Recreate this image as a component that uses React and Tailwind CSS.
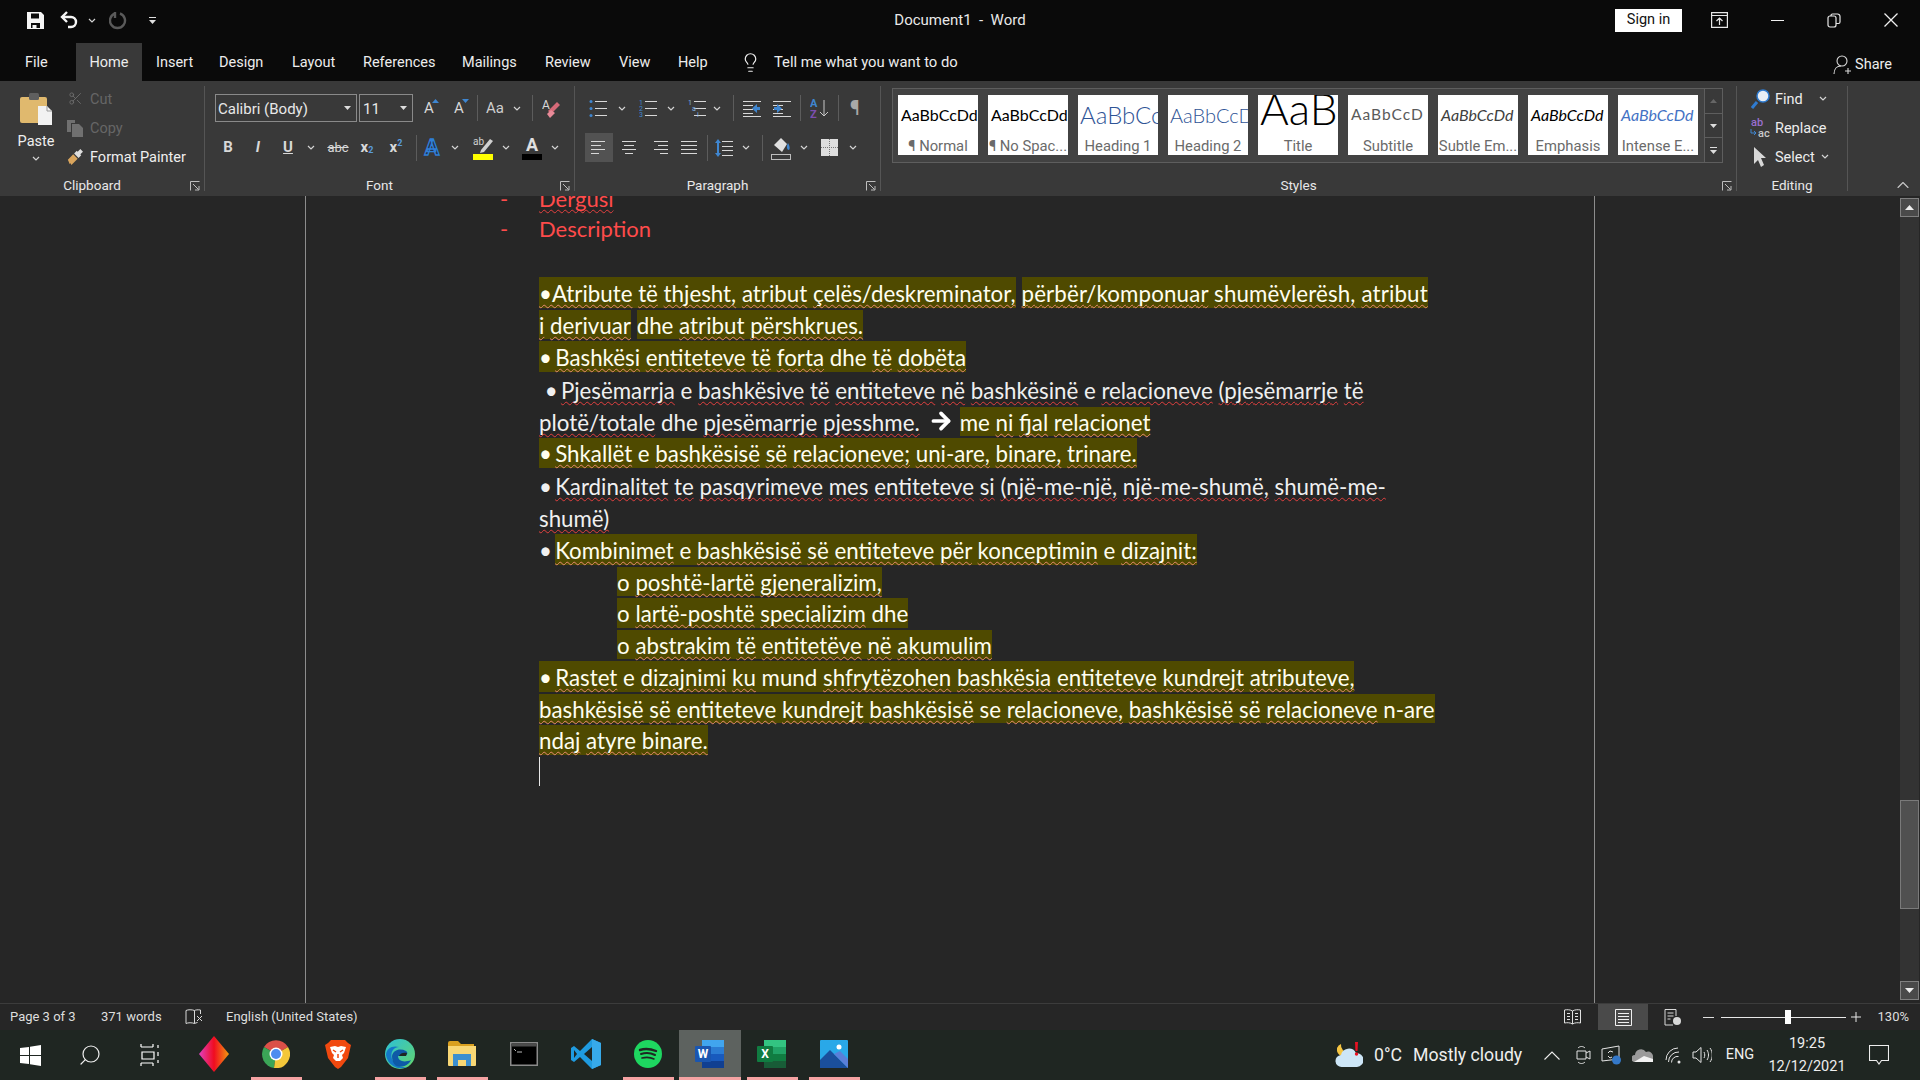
import { ArrowRight, Lightbulb, Scissors, Search, ChevronUp } from "lucide-react";

/* ================= SMALL HELPERS ================= */

const C = ({ className = "", children }) => (
    <div className={`flex items-center justify-center shrink-0 h-full ${className}`}>{children}</div>
);

const Chev = ({ color = "#d4d4d4" }) => (
    <svg width="8" height="5" viewBox="0 0 8 5"><path d="M1 1l3 3 3-3" fill="none" stroke={color} strokeWidth="1.2" /></svg>
);

const Sep = ({ className = "h-[26px]" }) => <div className={`w-px shrink-0 bg-[#5c5c5c] ${className}`} />;

const Launcher = () => (
    <svg width="10" height="10" viewBox="0 0 10 10" fill="none" stroke="#bdbdbd">
        <path d="M.5 9.5V.5h9" /><path d="M3 3l5.5 5.5M9 5v4H5" />
    </svg>
);

const Group = ({ label, launcher = true, className = "", children }) => (
    <div className={`shrink-0 flex flex-col h-full ${className}`}>
        <div className="h-[92px]">{children}</div>
        <div className="h-[23px] pt-[2px] flex items-center text-[13.5px] text-[#e8e8e8]">
            <div className="flex-1 text-center">{label}</div>
            {launcher && <div className="w-[20px] pr-[4px] flex justify-end"><Launcher /></div>}
        </div>
    </div>
);

const GroupSep = () => <div className="w-px shrink-0 bg-[#555555] my-[5px]" />;

const Lines = ({ rows, x = 0, w = 14 }) => (
    <g stroke="#d8d8d8" strokeWidth="1">
        {rows.map((y, i) => <path key={i} d={`M${x} ${y + 0.5}h${Array.isArray(w) ? w[i] : w}`} />)}
    </g>
);

const Ic = ({ w = 18, h = 18, children }) => (
    <svg width={w} height={h} viewBox={`0 0 ${w} ${h}`} fill="none">{children}</svg>
);

const AlignIcon = ({ kind }) => {
    const rows = [2, 6, 10, 14];
    const d = {
        left: [14, 10, 14, 8],
        center: [14, 10, 14, 8],
        right: [14, 10, 14, 8],
        justify: [16, 16, 16, 16]
    }[kind];
    return (
        <Ic w={16} h={17}>
            <g stroke="#d8d8d8">
                {rows.map((y, i) => {
                    const x = kind === "left" || kind === "justify" ? 0 : kind === "right" ? 16 - d[i] : (16 - d[i]) / 2;
                    return <path key={y} d={`M${x} ${y + 0.5}h${d[i]}`} />;
                })}
            </g>
        </Ic>
    );
};

/* ================= TITLE BAR ================= */

function TitleBar() {
    return (
        <div className="h-[40px] grid grid-cols-[1fr_auto_1fr] items-center text-[#e8e8e8]">
            <div className="flex h-full items-center">
                <C className="w-[25px]" />
                <C className="w-[20px]">
                    <svg width="17" height="17" viewBox="0 0 17 17">
                        <path fillRule="evenodd" fill="#f5f5f5" d="M0 0h14l3 3v14H0zM4 1.5v5h8v-5zM4 11v5h1.5v-3h4v3H13v-5z" />
                    </svg>
                </C>
                <C className="w-[13px]" />
                <C className="w-[24px]">
                    <svg width="20" height="18" viewBox="0 0 20 18" fill="none" stroke="#f5f5f5" strokeWidth="2.4">
                        <path d="M7 1L2 6l5 5" /><path d="M2 6h9a5 5 0 0 1 0 10H8" />
                    </svg>
                </C>
                <C className="w-[3px]" />
                <C className="w-[14px]"><Chev /></C>
                <C className="w-[7px]" />
                <C className="w-[24px]">
                    <svg width="18" height="19" viewBox="0 0 18 19" fill="none" stroke="#5a5a5a" strokeWidth="2.4">
                        <path d="M11 2.5a7.5 7.5 0 1 1-5 0" /><path d="M6 1v6" />
                    </svg>
                </C>
                <C className="w-[16px]" />
                <C className="w-[12px]">
                    <svg width="9" height="9" viewBox="0 0 9 9" fill="#e0e0e0"><path d="M1 1h7v1H1zM1 4h7L4.500 8z" /></svg>
                </C>
            </div>
            <div className="text-[15px] whitespace-nowrap">Document1&nbsp; -&nbsp; Word</div>
            <div className="flex h-full items-center justify-end">
                <div className="w-[67px] h-[23px] mr-[8px] bg-white text-[#111] text-[14.5px] flex items-center justify-center">Sign in</div>
                <C className="w-[58px]">
                    <svg width="17" height="16" viewBox="0 0 17 16" fill="none" stroke="#e8e8e8" strokeWidth="1.2">
                        <path d="M.6.6h15.800v14.800H.6zM.6 3.500h15.800M8.500 13V6M5.500 9l3-3 3 3" />
                    </svg>
                </C>
                <C className="w-[58px]"><div className="w-[13px] h-px bg-[#f0f0f0]" /></C>
                <C className="w-[56px]">
                    <svg width="14" height="15" viewBox="0 0 14 15" fill="none" stroke="#e8e8e8" strokeWidth="1.2">
                        <path d="M1 5a2 2 0 0 1 2-2h4a2 2 0 0 1 2 2v7a2 2 0 0 1-2 2H3a2 2 0 0 1-2-2zM4 3V2.500A1.500 1.500 0 0 1 5.500 1h5A2.500 2.500 0 0 1 13 3.500V9a1.500 1.500 0 0 1-1.500 1.500H9" />
                    </svg>
                </C>
                <C className="w-[58px]">
                    <svg width="14" height="14" viewBox="0 0 14 14" stroke="#f0f0f0" strokeWidth="1.3"><path d="M.5.5l13 13M13.500.5l-13 13" /></svg>
                </C>
            </div>
        </div>
    );
}

function TabBar() {
    const tabs = [
        ["Insert", "w-[36px]"], ["Design", "w-[46px]"], ["Layout", "w-[44px]"], ["References", "w-[72px]"],
        ["Mailings", "w-[56px]"], ["Review", "w-[47px]"], ["View", "w-[32px]"], ["Help", "w-[32px]"]
    ];
    return (
        <div className="h-[41px] flex items-end text-[14.5px] text-[#ededed]">
            <div className="w-[76px] h-[38px] pl-[25px] pt-[1px] flex items-center">File</div>
            <div className="w-[66px] h-[38px] pt-[1px] bg-[#393939] flex items-center justify-center">Home</div>
            <div className="flex gap-[27px] h-[38px] pt-[1px] items-center ml-[14px]">
                {tabs.map(([t, w]) => <div key={t} className={`${w} whitespace-nowrap`}>{t}</div>)}
            </div>
            <div className="flex h-[38px] items-center ml-[30px]">
                <Lightbulb size={21} strokeWidth={1.4} className="text-[#ededed]" />
                <div className="ml-[13px] text-[14.8px] whitespace-nowrap">Tell me what you want to do</div>
            </div>
            <div className="flex-1 flex h-[41px] items-center justify-end pr-[28px] pt-[9px]">
                <svg width="19" height="20" viewBox="0 0 19 20" fill="none" stroke="#d8d8d8" strokeWidth="1.1">
                    <circle cx="9" cy="6" r="5" /><path d="M1 19c0-5 3-8 7-8M12 16h6M15 13v6" />
                </svg>
                <div className="ml-[3px]">Share</div>
            </div>
        </div>
    );
}

/* ================= RIBBON ================= */

function Clipboard() {
    return (
        <Group label="Clipboard" className="w-[204px]">
            <div className="flex h-full">
                <div className="w-[60px] ml-[6px] flex flex-col items-center pt-[11px]">
                    <svg width="34" height="33" viewBox="0 0 34 33">
                        <rect x="1" y="5" width="27" height="26" rx="2" fill="#e0b96e" />
                        <rect x="10" y="1" width="10" height="7" rx="1.500" fill="#5f5f5f" />
                        <path d="M19 14h9l5 5v14H19z" fill="#f2f2f2" /><path d="M28 14v5h5" fill="none" stroke="#999" />
                    </svg>
                    <div className="text-[14.5px] text-[#efefef] mt-[7px] leading-[20px]">Paste</div>
                    <div className="mt-[4px]"><Chev /></div>
                </div>
                <div className="ml-[1px] flex flex-col pt-[3px] text-[14.5px]">
                    <div className="h-[29px] flex items-center text-[#666666]">
                        <C className="w-[16px]"><Scissors size={15} strokeWidth={1.4} className="text-[#6e6e6e]" /></C>
                        <span className="ml-[7px] pt-[2px]">Cut</span>
                    </div>
                    <div className="h-[30px] flex items-center text-[#666666]">
                        <C className="w-[16px]">
                            <svg width="16" height="17" viewBox="0 0 16 17" fill="#707070"><path d="M0 0h8v3H4v9H0zM5 4h7l4 4v9H5z" /></svg>
                        </C>
                        <span className="ml-[7px] pt-[2px]">Copy</span>
                    </div>
                    <div className="h-[28px] flex items-center text-[#efefef]">
                        <C className="w-[16px]">
                            <svg width="18" height="18" viewBox="0 0 18 18">
                                <path d="M1 12l6-6 5 5-7 7-1-2-1 1z" fill="#d9a55d" /><path d="M8 5l3-3 1 1 3-3 3 3-3 3 1 1-3 3z" fill="#dedede" />
                            </svg>
                        </C>
                        <span className="ml-[7px] pt-[2px] whitespace-nowrap">Format Painter</span>
                    </div>
                </div>
            </div>
        </Group>
    );
}

const CapA = ({ up }) => (
    <div className="relative text-[15px] text-[#d8d8d8] leading-none">
        A
        <svg className="absolute -top-[2px] -right-[5px]" width="7" height="4" viewBox="0 0 7 4" fill="#3f86d0">
            <path d={up ? "M0 4l3.500-4L7 4z" : "M0 0h7L3.500 4z"} />
        </svg>
    </div>
);

function FontGroup() {
    return (
        <Group label="Font" className="w-[369px]">
            <div className="pl-[10px] pt-[13px]">
                <div className="flex h-[28px] items-center">
                    <div className="w-[142px] h-full border border-[#8a8a8a] flex items-center justify-between pl-[2px] pr-[5px] text-[15px] text-[#e8e8e8]">
                        <span className="pt-[2px]">Calibri (Body)</span>
                        <svg width="7" height="4" viewBox="0 0 7 4" fill="#ddd"><path d="M0 0h7L3.500 4z" /></svg>
                    </div>
                    <div className="ml-[2px] w-[54px] h-full border border-[#8a8a8a] flex items-center justify-between pl-[3px] pr-[5px] text-[15px] text-[#e8e8e8]">
                        <span className="pt-[2px]">11</span>
                        <svg width="7" height="4" viewBox="0 0 7 4" fill="#ddd"><path d="M0 0h7L3.500 4z" /></svg>
                    </div>
                    <C className="w-[32px]"><CapA up /></C>
                    <C className="w-[28px]"><CapA /></C>
                    <C className="w-[4px]" />
                    <Sep />
                    <C className="w-[34px] text-[15px] text-[#cfcfcf]">Aa</C>
                    <C className="w-[10px]"><Chev /></C>
                    <C className="w-[10px]" />
                    <Sep />
                    <C className="w-[38px]">
                        <svg width="20" height="21" viewBox="0 0 20 21">
                            <path d="M9 16l9-9-3-3-9 9z" fill="#d66a78" /><path d="M8 20l5-5-4-3-4 4z" fill="#e88a98" />
                            <text x="0" y="11" fontSize="12" fill="#d8d8d8" fontFamily="Roboto">A</text>
                        </svg>
                    </C>
                </div>
                <div className="flex h-[29px] items-center mt-[11px] text-[15px] text-[#d8d8d8]">
                    <C className="w-[26px] font-bold">B</C>
                    <C className="w-[34px] italic font-bold">I</C>
                    <C className="w-[26px] font-bold underline">U</C>
                    <C className="w-[20px]"><Chev /></C>
                    <C className="w-[34px] text-[13px] line-through">abc</C>
                    <C className="w-[24px] font-bold">x<span className="text-[#5a9bdc] text-[9px] mt-[7px]">2</span></C>
                    <C className="w-[34px] font-bold">x<span className="text-[#5a9bdc] text-[9px] -mt-[7px]">2</span></C>
                    <C className="w-[3px]" />
                    <Sep />
                    <C className="w-[30px]">
                        <span className="text-[22px] font-bold leading-none text-[#22324a] [-webkit-text-stroke:1.3px_#2f7fd6]">A</span>
                    </C>
                    <C className="w-[16px]"><Chev /></C>
                    <C className="w-[36px] pl-[4px]">
                        <svg width="21" height="24" viewBox="0 0 21 24">
                            <path d="M8 14L17 3l3 2-9 11-4 1z" fill="#d0d0d0" />
                            <text x="0" y="9" fontSize="10" fill="#d0d0d0" fontFamily="Roboto">ab</text>
                            <rect y="18" width="20" height="6" fill="#ffff00" />
                        </svg>
                    </C>
                    <C className="w-[14px]"><Chev /></C>
                    <C className="w-[38px]">
                        <div className="flex flex-col items-center w-[20px]">
                            <span className="text-[18px] leading-[18px] font-bold text-[#e0e0e0]">A</span>
                            <div className="w-[20px] h-[6px] bg-black" />
                        </div>
                    </C>
                    <C className="w-[8px]"><Chev /></C>
                </div>
            </div>
        </Group>
    );
}

const ListIcon = ({ kind }) => (
    <Ic w={18} h={18}>
        <Lines rows={[2, 9, 16]} x={6} w={12} />
        {kind === "bullet" && <g fill="#3f86d0"><circle cx="2" cy="2.500" r="1.500" /><circle cx="2" cy="9.500" r="1.500" /><circle cx="2" cy="16.500" r="1.500" /></g>}
        {kind === "number" && <g fill="#3f86d0" fontSize="7" fontFamily="Roboto"><text y="6">1</text><text y="12">2</text><text y="18">3</text></g>}
        {kind === "multi" && <g fill="#7db0e0" fontSize="7" fontFamily="Roboto"><text y="6">1</text><text x="4" y="12">a</text><text x="9" y="18">i</text></g>}
    </Ic>
);

const IndentIcon = ({ right }) => (
    <svg width="18" height="17" viewBox="0 0 18 17">
        <Lines rows={[1, 5, 9, 13, 16]} x={0} w={[18, 10, 10, 10, 18]} />
        <g transform={right ? "translate(0 0)" : "translate(18 0) scale(-1 1)"}>
            <path d="M1 7h3V4l5 4.500L4 13v-3H1z" fill="#3f86d0" />
        </g>
    </svg>
);

function ParagraphGroup() {
    return (
        <Group label="Paragraph" className="w-[305px]">
            <div className="pt-[13px]">
                <div className="flex h-[28px] items-center">
                    <C className="w-[42px] pl-[4px]"><ListIcon kind="bullet" /></C>
                    <C className="w-[10px]"><Chev /></C>
                    <C className="w-[39px] pl-[3px]"><ListIcon kind="number" /></C>
                    <C className="w-[10px]"><Chev /></C>
                    <C className="w-[36px] pl-[6px]"><ListIcon kind="multi" /></C>
                    <C className="w-[10px]"><Chev /></C>
                    <C className="w-[11px]" />
                    <Sep />
                    <C className="w-[36px]"><IndentIcon /></C>
                    <C className="w-[24px]"><IndentIcon right /></C>
                    <C className="w-[6px]" />
                    <Sep />
                    <C className="w-[37px]">
                        <svg width="20" height="22" viewBox="0 0 20 22">
                            <text x="0" y="10" fontSize="11" fontWeight="700" fill="#3f86d0" fontFamily="Roboto">A</text>
                            <text x="0" y="21" fontSize="11" fontWeight="700" fill="#7c4fb0" fontFamily="Roboto">Z</text>
                            <path d="M14 3v16M10 15l4 4 4-4" stroke="#c8c8c8" fill="none" />
                        </svg>
                    </C>
                    <Sep />
                    <C className="w-[32px] text-[20px] text-[#a8a8a8]">¶</C>
                </div>
                <div className="flex h-[29px] items-center mt-[11px]">
                    <C className="w-[28px] ml-[10px] bg-[#525252]"><AlignIcon kind="left" /></C>
                    <C className="w-[32px]"><AlignIcon kind="center" /></C>
                    <C className="w-[30px]"><AlignIcon kind="right" /></C>
                    <C className="w-[28px]"><AlignIcon kind="justify" /></C>
                    <C className="w-[4px]" />
                    <Sep />
                    <C className="w-[32px]">
                        <svg width="18" height="20" viewBox="0 0 18 20">
                            <Lines rows={[3, 8, 12, 17]} x={7} w={11} />
                            <path d="M3 1l3 4H4v10h2l-3 4-3-4h2V5H0z" fill="#3f86d0" />
                        </svg>
                    </C>
                    <C className="w-[12px]"><Chev /></C>
                    <C className="w-[10px]" />
                    <Sep />
                    <C className="w-[36px]">
                        <svg width="20" height="24" viewBox="0 0 20 24">
                            <path d="M3 9l7-7 6 6-5 8z" fill="#e0e0e0" /><path d="M17 7c2 3 2 6 1 7-2 0-3-3-1-7z" fill="#3f86d0" />
                            <rect x=".5" y="18.500" width="19" height="5" fill="none" stroke="#bdbdbd" />
                        </svg>
                    </C>
                    <C className="w-[10px]"><Chev /></C>
                    <C className="w-[40px]">
                        <svg width="17" height="17" viewBox="0 0 17 17">
                            <rect width="17" height="17" fill="#dedede" />
                            <path d="M8.500 0v17M0 8.500h17" stroke="#777" strokeDasharray="1 1" />
                        </svg>
                    </C>
                    <C className="w-[8px]"><Chev /></C>
                </div>
            </div>
        </Group>
    );
}

const STYLES = [
    { s: "AaBbCcDd", l: "¶ Normal", c: "text-[16px] text-black pl-[3px]" },
    { s: "AaBbCcDd", l: "¶ No Spac...", c: "text-[16px] text-black pl-[3px]" },
    { s: "AaBbCc", l: "Heading 1", c: "text-[24px] font-light text-[#2f5496] pl-[2px]" },
    { s: "AaBbCcD", l: "Heading 2", c: "text-[20px] font-light text-[#2f5496] pl-[2px]" },
    { s: "AaB", l: "Title", c: "text-[44px] font-light text-black pl-[2px] -mt-[14px]" },
    { s: "AaBbCcD", l: "Subtitle", c: "text-[15.5px] tracking-[1px] text-[#5a5a5a] pl-[3px]" },
    { s: "AaBbCcDd", l: "Subtle Em...", c: "text-[16px] italic text-[#404040] pl-[3px]" },
    { s: "AaBbCcDd", l: "Emphasis", c: "text-[16px] italic text-black pl-[3px]" },
    { s: "AaBbCcDd", l: "Intense E...", c: "text-[16px] italic text-[#4472c4] pl-[3px]" }
];

function StylesGroup() {
    return (
        <Group label="Styles" className="w-[855px]">
            <div className="ml-[11px] mt-[7px] w-[831px] h-[75px] border border-[#5e5e5e] bg-[#424242] flex">
                <div className="flex gap-[10px] pl-[5px] pt-[6px] w-[812px]">
                    {STYLES.map(st => (
                        <div key={st.l} className="w-[80px] h-[60px] bg-white overflow-hidden flex flex-col">
                            <div className="h-[39px] shrink-0 flex items-center overflow-hidden whitespace-nowrap font-[Lato,sans-serif]">
                                <span className={st.c}>{st.s}</span>
                            </div>
                            <div className="h-[21px] text-[14.8px] leading-[25px] text-[#6a6a6a] text-center whitespace-nowrap">{st.l}</div>
                        </div>
                    ))}
                </div>
                <div className="w-[18px] flex flex-col border-l border-[#5e5e5e] bg-[#393939]">
                    <div className="h-[25px] border-b border-[#5e5e5e] flex items-center justify-center">
                        <svg width="7" height="4" viewBox="0 0 7 4" fill="#666"><path d="M0 4l3.500-4L7 4z" /></svg>
                    </div>
                    <div className="h-[24px] border-b border-[#5e5e5e] flex items-center justify-center">
                        <svg width="7" height="4" viewBox="0 0 7 4" fill="#ddd"><path d="M0 0h7L3.500 4z" /></svg>
                    </div>
                    <div className="flex-1 flex items-center justify-center">
                        <svg width="9" height="9" viewBox="0 0 9 9" fill="#ddd"><path d="M1 1h7v1H1zM1 4h7L4.500 8z" /></svg>
                    </div>
                </div>
            </div>
        </Group>
    );
}

function EditingGroup() {
    return (
        <Group label="Editing" launcher={false} className="w-[110px]">
            <div className="pt-[3px] text-[14.5px] text-[#ededed]">
                <div className="h-[29px] flex items-center">
                    <C className="w-[38px] pl-[8px]">
                        <svg width="19" height="20" viewBox="0 0 19 20">
                            <path d="M6 13l-5 6" stroke="#2f7bd0" strokeWidth="3" /><circle cx="12" cy="7" r="6" fill="#e8eef5" stroke="#2f7bd0" strokeWidth="1.500" />
                        </svg>
                    </C>
                    <span className="pt-[2px]">Find</span>
                    <span className="ml-[16px]"><Chev /></span>
                </div>
                <div className="h-[29px] flex items-center">
                    <C className="w-[38px] pl-[7px]">
                        <svg width="20" height="21" viewBox="0 0 20 21" fontFamily="Roboto" fontSize="11" fontWeight="500">
                            <text x="1" y="9" fill="#9a6fd0">ab</text><text x="8" y="20" fill="#c9c9c9">ac</text>
                            <path d="M1 12v4h5M4 14l2 2-2 2" fill="none" stroke="#3f86d0" />
                        </svg>
                    </C>
                    <span className="pt-[2px]">Replace</span>
                </div>
                <div className="h-[29px] flex items-center">
                    <C className="w-[38px] pl-[7px]">
                        <svg width="12" height="20" viewBox="0 0 12 20" fill="#d8d8d8"><path d="M0 0l12 11H7l3 7-3 2-3-7-4 4z" /></svg>
                    </C>
                    <span className="pt-[2px]">Select</span>
                    <span className="ml-[6px]"><Chev /></span>
                </div>
            </div>
        </Group>
    );
}

function Ribbon() {
    return (
        <div className="h-[115px] bg-[#393939] flex">
            <Clipboard />
            <GroupSep />
            <FontGroup />
            <GroupSep />
            <ParagraphGroup />
            <GroupSep />
            <StylesGroup />
            <GroupSep />
            <EditingGroup />
            <GroupSep />
            <div className="flex-1 flex items-end justify-end pr-[7px] pb-[1px]">
                <ChevronUp size={20} strokeWidth={1.3} className="text-[#c8c8c8]" />
            </div>
        </div>
    );
}

/* ================= DOCUMENT ================= */

const NO_WAVE = ["e", "dhe", "o", "me", "mund", "se", "n-are", "Description"];

const Words = ({ text, wave = "decoration-[#e2403f]" }) => text.split(" ").map((w, i) => (
    <span key={i}>
        {i > 0 && " "}
        {w === "•" && <span className="tracking-[-2.500px]">{w}</span>}
        {w && w !== "•" && (NO_WAVE.includes(w)
            ? <span>{w}</span>
            : <span className={`underline decoration-wavy decoration-1 underline-offset-[2px] [text-decoration-skip-ink:none] ${wave}`}>{w}</span>)}
    </span>
));

const Hl = ({ className = "", children }) => <span className={`inline-block h-full bg-[#4f4a00] text-[#fffef0] ${className}`}><Words text={children} wave="decoration-[#e88a70]" /></span>;

const Plain = ({ children }) => <span className="inline-block h-full text-[#f0f0f0]"><Words text={children} /></span>;

function DocLines() {
    return (
        <div className="mt-[33px] flex flex-col gap-[2px] pl-[39px] font-[Lato,sans-serif] text-[22.3px] whitespace-pre">
            <div className="h-[31px] leading-[33px]"><Hl>•Atribute të thjesht, atribut çelës/deskreminator,</Hl><span className="inline-block w-[6px]" /><Hl className="tracking-[0.15px]">përbër/komponuar shumëvlerësh, atribut</Hl></div>
            <div className="h-[29px] leading-[31px]"><Hl>i derivuar</Hl><Plain> </Plain><Hl>dhe atribut përshkrues.</Hl></div>
            <div className="h-[31px] leading-[33px]"><Hl>• Bashkësi entiteteve të forta dhe të dobëta</Hl></div>
            <div className="h-[31px] leading-[33px]"><Plain> • Pjesëmarrja e bashkësive të entiteteve në bashkësinë e relacioneve (pjesëmarrje të</Plain></div>
            <div className="h-[29px] leading-[31px] flex">
                <Plain>plotë/totale dhe pjesëmarrje pjesshme.</Plain>
                <ArrowRight size={26} strokeWidth={3.4} className="text-white ml-[8px] mr-[6px] mt-[1px]" />
                <Hl>me ni fjal relacionet</Hl>
            </div>
            <div className="h-[30px] leading-[32px]"><Hl>• Shkallët e bashkësisë së relacioneve; uni-are, binare, trinare.</Hl></div>
            <div className="h-[31px] leading-[33px]"><Plain>• Kardinalitet te pasqyrimeve mes entiteteve si (një-me-një, një-me-shumë, shumë-me-</Plain></div>
            <div className="h-[29px] leading-[31px]"><Plain>shumë)</Plain></div>
            <div className="h-[31px] leading-[33px]"><Plain>• </Plain><Hl>Kombinimet e bashkësisë së entiteteve për konceptimin e dizajnit:</Hl></div>
            <div className="h-[29px] leading-[31px] pl-[78px]"><Hl>o poshtë-lartë gjeneralizim,</Hl></div>
            <div className="h-[30px] leading-[32px] pl-[78px]"><Hl>o lartë-poshtë specializim dhe</Hl></div>
            <div className="h-[29px] leading-[31px] pl-[78px]"><Hl>o abstrakim të entitetëve në akumulim</Hl></div>
            <div className="h-[31px] leading-[33px]"><Hl>• Rastet e dizajnimi ku mund shfrytëzohen bashkësia entiteteve kundrejt atributeve,</Hl></div>
            <div className="h-[29px] leading-[31px]"><Hl>bashkësisë së entiteteve kundrejt bashkësisë se relacioneve, bashkësisë së relacioneve n-are</Hl></div>
            <div className="h-[30px] leading-[32px]"><Hl>ndaj atyre binare.</Hl></div>
            <div className="h-[29px] w-px bg-[#e8e8e8]" />
        </div>
    );
}

function Scrollbar() {
    return (
        <div className="w-[19px] mr-px mt-[2px] mb-[3px] bg-[#333333] flex flex-col">
            <div className="h-[19px] shrink-0 bg-[#4a4a4a] border border-[#808080] flex items-center justify-center">
                <svg width="9" height="5" viewBox="0 0 9 5" fill="#eee"><path d="M0 5l4.500-5L9 5z" /></svg>
            </div>
            <div className="flex-1 pt-[583px]">
                <div className="h-[109px] bg-[#505050] border border-[#7a7a7a]" />
            </div>
            <div className="h-[19px] shrink-0 bg-[#4a4a4a] border border-[#808080] flex items-center justify-center">
                <svg width="9" height="5" viewBox="0 0 9 5" fill="#eee"><path d="M0 0h9L4.500 5z" /></svg>
            </div>
        </div>
    );
}

function DocArea() {
    return (
        <div className="h-[807px] bg-[#262626] flex overflow-hidden">
            <div className="w-[305px] shrink-0" />
            <div className="w-[1290px] shrink-0 border-x border-[#8c8c8c] pl-[194px] overflow-hidden">
                <div className="-mt-[12px] font-[Lato,sans-serif] text-[22px] text-[#ff4b4b]">
                    <div className="h-[30px] leading-[30px] flex">
                        <span className="w-[39px]">-</span><Words text="Dergusi" />
                    </div>
                    <div className="h-[30px] leading-[30px] flex">
                        <span className="w-[39px]">-</span><span>Description</span>
                    </div>
                </div>
                <DocLines />
            </div>
            <div className="flex-1" />
            <Scrollbar />
        </div>
    );
}

/* ================= STATUS BAR ================= */

function StatusBar() {
    return (
        <div className="h-[27px] bg-[#262626] border-t border-[#3c3c3c] flex items-center text-[13px] text-[#dedede]">
            <div className="w-[101px] pl-[10px] whitespace-nowrap">Page 3 of 3</div>
            <div className="w-[84px] whitespace-nowrap">371 words</div>
            <svg width="19" height="16" viewBox="0 0 19 16" fill="none" stroke="#d8d8d8">
                <path d="M9.500 1.500C7 .500 3 .500 1 1.500v13c2-1 6-1 8.500 0 1-.500 2-.800 3-1M9.500 1.500c1-.500 3-1 6-.500v4M9.500 1.500v13M12 7l5 5M17 7l-5 5" />
            </svg>
            <div className="ml-[22px] whitespace-nowrap">English (United States)</div>
            <div className="flex-1" />
            <C className="w-[52px]">
                <svg width="17" height="16" viewBox="0 0 17 16" fill="none" stroke="#e0e0e0"><path d="M8.500 2C6 .500 3 .500 .5 1v13c2.500-.500 5.500-.500 8 1 2.500-1.500 5.500-1.500 8-1V1C14 .500 11 .500 8.500 2zM8.500 2v13M3 4.500h3M3 7.500h3M3 10.500h3M11 4.500h3M11 7.500h3M11 10.500h3" /></svg>
            </C>
            <C className="w-[50px] bg-[#4a4a4a]">
                <svg width="17" height="17" viewBox="0 0 17 17" fill="none" stroke="#f0f0f0"><path d="M.5.500h16v16H.5zM3 4.500h11M3 7.500h11M3 10.500h11M3 13.500h11" /></svg>
            </C>
            <C className="w-[50px]">
                <svg width="18" height="17" viewBox="0 0 18 17" fill="none" stroke="#d8d8d8"><path d="M9 16H1V.5h11V7M3.500 4h6M3.500 7h6M3.500 10h3" /><circle cx="13" cy="12" r="4" fill="#d8d8d8" stroke="none" /></svg>
            </C>
            <div className="w-[11px] h-px bg-[#e0e0e0] ml-[5px] mr-[7px]" />
            <div className="w-[125px] h-px bg-[#e8e8e8] flex items-center pl-[64px]">
                <div className="w-[6px] h-[14px] bg-white shrink-0" />
            </div>
            <div className="ml-[5px] w-[10px] h-[10px] flex items-center justify-center">
                <svg width="10" height="10" viewBox="0 0 10 10" stroke="#e8e8e8"><path d="M5 0v10M0 5h10" /></svg>
            </div>
            <div className="w-[59px] text-right pr-[11px]">130%</div>
        </div>
    );
}

/* ================= TASKBAR ================= */

const Chrome = () => (
    <svg width="28" height="28" viewBox="0 0 28 28">
        <path d="M14 14L2 7a14 14 0 0 1 24 0z" fill="#db5048" />
        <path d="M14 14L2 7a14 14 0 0 0 10 21z" fill="#3ba557" />
        <path d="M14 14l12-7a14 14 0 0 1-14 21z" fill="#f3c73a" />
        <circle cx="14" cy="14" r="6.500" fill="#fff" /><circle cx="14" cy="14" r="5" fill="#4d8df0" />
    </svg>
);

const Brave = () => (
    <svg width="26" height="30" viewBox="0 0 26 30">
        <path d="M6 1h14l3 3 3 2-3 13-7 9-3 2-3-2-7-9L0 6l3-2z" fill="#f1490f" />
        <path d="M5 8l5-1 3 1 3-1 5 1-2 6-2 2 1 3-3 3h-4l-3-3 1-3-2-2z" fill="#fff" />
        <path d="M8 11l3 2M18 11l-3 2M13 15v4" stroke="#f1490f" strokeWidth="1.500" />
    </svg>
);

const Edge = () => (
    <svg width="30" height="30" viewBox="0 0 30 30">
        <defs>
            <linearGradient id="edgeA" x1="0" y1="0" x2="1" y2="1"><stop offset="0" stopColor="#2cc0d8" /><stop offset="1" stopColor="#64d66a" /></linearGradient>
        </defs>
        <circle cx="15" cy="15" r="15" fill="url(#edgeA)" />
        <path d="M1 16C1 9 8 6 14 8c-6 0-9 6-7 12 2 5 9 9 15 8a15 15 0 0 1-21-12z" fill="#1478c8" />
        <path d="M7 17c1-6 8-8 14-5 3 2 0 4 0 5H13c0 5 6 7 13 4-3 7-12 8-16 5-2-2-3-5-3-9z" fill="#0e5aa7" />
        <path d="M14 17c1-3 5-4 8-3l-1 3z" fill="#1f2622" />
    </svg>
);

const Folder = () => (
    <svg width="28" height="26" viewBox="0 0 28 26">
        <path d="M0 2a2 2 0 0 1 2-2h8l3 3h13v6H0z" fill="#d9a020" />
        <path d="M0 5h28v19a1 1 0 0 1-1 1H1a1 1 0 0 1-1-1z" fill="#f8d775" />
        <path d="M5 13h18v12h-5v-6h-8v6H5z" fill="#3c8fd0" />
    </svg>
);

const Terminal = () => (
    <svg width="28" height="24" viewBox="0 0 28 24">
        <rect width="28" height="24" fill="#8a8a8a" /><rect x="1.500" y="1.500" width="25" height="21" fill="#000" />
        <rect x="1.500" y="1.500" width="25" height="3" fill="#4c4c4c" />
        <path d="M4 7l2 2M7 10h5" stroke="#bbb" />
    </svg>
);

const VsCode = () => (
    <svg width="30" height="30" viewBox="0 0 30 30">
        <path d="M21 0l9 4v22l-9 4-12-12-6 5-3-2v-12l3-2 6 5z" fill="#1f9be0" />
        <path d="M21 8l-8 7 8 7z" fill="#1f2622" /><path d="M3 11l3 4-3 4z" fill="#1f2622" />
        <path d="M21 0l9 4v22l-9 4z" fill="#37aaea" />
    </svg>
);

const Spotify = () => (
    <svg width="28" height="28" viewBox="0 0 28 28">
        <circle cx="14" cy="14" r="14" fill="#1ed760" />
        <g fill="none" stroke="#1f2622" strokeLinecap="round">
            <path d="M6 10c6-2 11-1 16 1" strokeWidth="2.400" /><path d="M7 14c5-1.500 10-1 14 1" strokeWidth="2" /><path d="M8 18c4-1 8-1 12 1" strokeWidth="1.600" />
        </g>
    </svg>
);

const Office = ({ letter, tile, c1, c2, c3, c4 }) => (
    <div className="relative w-[30px] h-[28px]">
        <svg width="30" height="28" viewBox="0 0 30 28" className="absolute inset-0">
            <rect x="7" width="22" height="7" fill={c1} />
            <rect x="7" y="7" width="22" height="7" fill={c2} />
            <rect x="7" y="14" width="22" height="7" fill={c3} />
            <rect x="7" y="21" width="22" height="7" fill={c4} />
        </svg>
        <div className={`absolute left-0 top-[6px] w-[16px] h-[16px] rounded-[1px] flex items-center justify-center text-white text-[12px] font-bold ${tile}`}>{letter}</div>
    </div>
);

const Photos = () => (
    <svg width="28" height="28" viewBox="0 0 28 28">
        <rect width="28" height="28" rx="1" fill="#29a8e8" />
        <circle cx="19" cy="7" r="2.500" fill="#fff" />
        <path d="M0 28V20l10-10 18 18z" fill="#1a4f9c" /><path d="M14 14l6-3 8 8v9z" fill="#5a7fd8" />
    </svg>
);

const Slot = ({ className = "w-[62px]", on = true, active = false, children }) => (
    <div className={`h-full flex flex-col items-center shrink-0 ${className} ${active ? "bg-[#5d625f]" : ""}`}>
        <div className="h-[47px] flex items-center justify-center">{children}</div>
        <div className={`h-[3px] ${active ? "w-[62px]" : "w-[51px]"} ${on ? "bg-[#f5a3a3]" : ""}`} />
    </div>
);

function Taskbar() {
    return (
        <div className="h-[50px] bg-[#1f2622] flex text-[#eeeeee]">
            <C className="w-[60px]">
                <svg width="21" height="21" viewBox="0 0 21 21" fill="#fff"><path d="M0 3l9-1v8H0zM10 1.800L21 0v10H10zM0 11h9v8l-9-1zM10 11h11v10l-11-1.800z" /></svg>
            </C>
            <C className="w-[60px]"><Search size={24} strokeWidth={1.2} className="-scale-x-100" /></C>
            <C className="w-[60px]">
                <svg width="20" height="22" viewBox="0 0 20 22" fill="none" stroke="#fff" strokeWidth="1.200">
                    <path d="M1 3V0M13 3V0M1 3h12M2 8h12v7H2zM1 19v3M13 19v3M1 19h12M18 1v3M18 8v4M18 16v3" />
                </svg>
            </C>
            <div className="w-[3px]" />
            <Slot on={false}>
                <svg width="30" height="36" viewBox="0 0 30 36">
                    <defs><linearGradient id="diaA" x1="0" y1="0" x2="1" y2="0"><stop offset="0" stopColor="#e040c0" /><stop offset=".5" stopColor="#f00c20" /><stop offset="1" stopColor="#f49a10" /></linearGradient></defs>
                    <path d="M15 0l15 18-15 18L0 18z" fill="url(#diaA)" />
                </svg>
            </Slot>
            <Slot><Chrome /></Slot>
            <Slot on={false}><Brave /></Slot>
            <Slot><Edge /></Slot>
            <Slot><Folder /></Slot>
            <Slot on={false}><Terminal /></Slot>
            <Slot on={false}><VsCode /></Slot>
            <Slot><Spotify /></Slot>
            <Slot active className="w-[62px]"><Office letter="W" tile="bg-[#1a56b0]" c1="#41a5ee" c2="#2b7cd3" c3="#185abd" c4="#103f91" /></Slot>
            <Slot><Office letter="X" tile="bg-[#107c41]" c1="#33c481" c2="#21a366" c3="#107c41" c4="#185c37" /></Slot>
            <Slot><Photos /></Slot>
            <div className="flex-1" />
            <div className="flex h-full items-center text-[#eeeeee]">
                <C className="w-[28px]">
                    <svg width="28" height="28" viewBox="0 0 28 28">
                        <path d="M6 3a8 8 0 0 0 8 9l-8 3a8 8 0 0 1-4-8 8 8 0 0 1 4-4z" fill="#f5c542" />
                        <path d="M7 26a6 6 0 0 1-1-12 8 8 0 0 1 15-2 7 7 0 0 1 1 14z" fill="#cde6f7" />
                        <path d="M20 1h3l-.5 9h-2z" fill="#e81123" /><circle cx="21.500" cy="13" r="1.700" fill="#e81123" />
                    </svg>
                </C>
                <div className="w-[50px] pl-[11px] text-[17.7px] whitespace-nowrap">0°C</div>
                <div className="w-[120px] text-[17.7px] whitespace-nowrap">Mostly cloudy</div>
                <C className="w-[38px]">
                    <svg width="16" height="9" viewBox="0 0 16 9" fill="none" stroke="#eee" strokeWidth="1.100"><path d="M.5 8.500L8 1l7.500 7.500" /></svg>
                </C>
                <C className="w-[24px]">
                    <svg width="15" height="20" viewBox="0 0 15 20" fill="none" stroke="#e4e4e4"><path d="M1 6h9v8H1zM10 8l4-2v8l-4-2M2 3c2-2 5-2 7 0M2 17c2 2 5 2 7 0" /></svg>
                </C>
                <C className="w-[32px]">
                    <svg width="21" height="20" viewBox="0 0 21 20" fill="none" stroke="#e4e4e4">
                        <path d="M1 4l17-3v13l-17 2zM7 8l2-2 3 1M11 12l-2 1-2-2" /><circle cx="15.500" cy="15" r="4.500" fill="#3478c8" stroke="none" />
                    </svg>
                </C>
                <C className="w-[30px]">
                    <svg width="21" height="14" viewBox="0 0 21 14"><path d="M3 14a3 3 0 0 1 0-7 6 6 0 0 1 11-3 5 5 0 0 1 7 5v5z" fill="#9a9a9a" /><path d="M2 14l10-6 9 3v3z" fill="#f2f2f2" /></svg>
                </C>
                <C className="w-[32px]">
                    <svg width="17" height="17" viewBox="0 0 17 17" fill="none" stroke="#e4e4e4"><path d="M1 13a12 12 0 0 1 12-12M3.500 15A10 10 0 0 1 14 5M6.500 15.500a6 6 0 0 1 7-6" /><circle cx="14" cy="15" r="1.500" fill="#e4e4e4" stroke="none" /></svg>
                </C>
                <C className="w-[26px]">
                    <svg width="20" height="18" viewBox="0 0 20 18" fill="none" stroke="#e4e4e4"><path d="M1 6h3l5-4.500v15L4 12H1zM12 6c1 2 1 4 0 6M15 4c2 3 2 7 0 10M18 2c3 4 3 10 0 14" /></svg>
                </C>
                <C className="w-[50px] text-[14.5px]">ENG</C>
                <div className="w-[84px] flex flex-col items-center text-[14.5px] leading-[23px]">
                    <div>19:25</div>
                    <div>12/12/2021</div>
                </div>
                <C className="w-[60px]">
                    <svg width="20" height="20" viewBox="0 0 20 20" fill="none" stroke="#eee" strokeWidth="1.100"><path d="M.5.500h19v15h-7L10 19l-2.500-3.500h-7z" /></svg>
                </C>
                <div className="w-[11px]" />
            </div>
        </div>
    );
}

export default function App() {
    return (
        <div className="w-[1920px] h-[1080px] overflow-hidden flex flex-col bg-[#0a0a0a] font-[Roboto,sans-serif]">
            <TitleBar />
            <TabBar />
            <Ribbon />
            <DocArea />
            <StatusBar />
            <Taskbar />
        </div>
    );
}
